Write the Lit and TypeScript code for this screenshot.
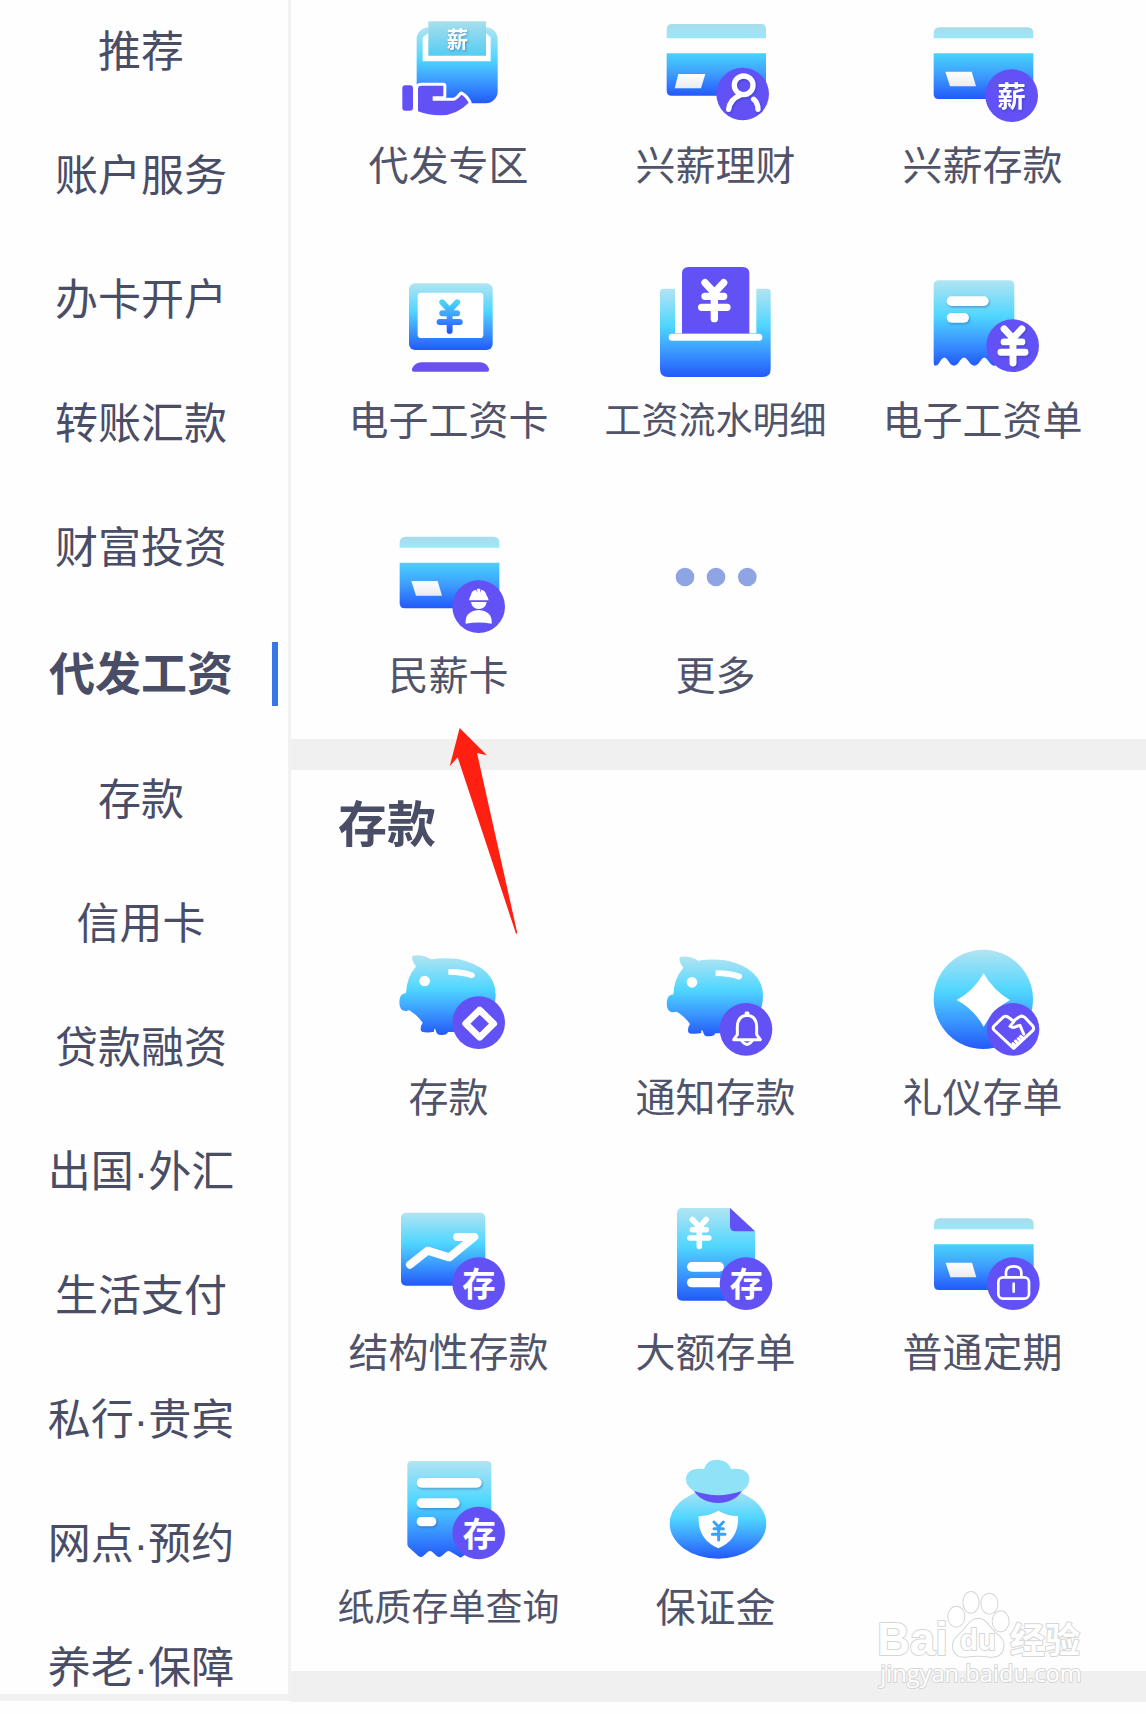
import { LitElement, html, svg, css, nothing, type SVGTemplateResult } from "lit";
import { customElement, property, state } from "lit/decorators.js";
import { classMap } from "lit/directives/class-map.js";

type Art = SVGTemplateResult;

interface Service {
  label: string;
  origin: [number, number];
  art: Art;
  marked?: boolean;
}

/* ---------- shared icon parts ---------- */

const gradients = svg`
  <defs>
    <linearGradient id="full" x1="0" y1="0" x2="0" y2="1">
      <stop offset="0" stop-color="#b2e4f2"/>
      <stop offset=".42" stop-color="#4fd6ff"/>
      <stop offset=".72" stop-color="#3a97ff"/>
      <stop offset="1" stop-color="#2359f8"/>
    </linearGradient>
    <linearGradient id="low" x1="0" y1="0" x2="0" y2="1">
      <stop offset="0" stop-color="#48d3fb"/>
      <stop offset=".5" stop-color="#3d9bfd"/>
      <stop offset="1" stop-color="#2259fb"/>
    </linearGradient>
    <linearGradient id="strip" x1="0" y1="0" x2="0" y2="1">
      <stop offset="0" stop-color="#a9dcea"/>
      <stop offset="1" stop-color="#9ce7fb"/>
    </linearGradient>
    <linearGradient id="tag" x1="0" y1="0" x2="0" y2="1">
      <stop offset="0" stop-color="#a8dfec"/>
      <stop offset="1" stop-color="#55ccf3"/>
    </linearGradient>
    <linearGradient id="chip" x1="0" y1="0" x2="0" y2="1">
      <stop offset="0" stop-color="#ffffff"/>
      <stop offset="1" stop-color="#e9ebf2"/>
    </linearGradient>
  </defs>`;

const badge = (cx: number, cy: number, inner: Art) => svg`
  <circle cx=${cx} cy=${cy} r="79" fill="#6252f6"/>${inner}`;

const card = (x: number, y: number) => svg`
  <g transform="translate(${x} ${y})">
    <path d="M0 33V18Q0 0 18 0H281Q299 0 299 18V33Z" fill="url(#strip)"/>
    <path d="M0 78H299V200Q299 215 284 215H15Q0 215 0 200Z" fill="url(#low)"/>
    <path d="M35 133H114L127 177H49Z" fill="url(#chip)"/>
  </g>`;

const yen = (cx: number, cy: number, scale: number, stroke = "#fff", width = 22) => svg`
  <path transform="translate(${cx} ${cy}) scale(${scale})"
    d="M-28-54L0-24L28-54M-28-13H28M-38 20H38M0-24V54"
    fill="none" stroke=${stroke} stroke-width=${width} stroke-linecap="round" stroke-linejoin="round"/>`;

const glyph = (x: number, y: number, size: number, char: string) => svg`
  <text class="glyph" x=${x} y=${y} font-size=${size} text-anchor="middle" fill="#fff">${char}</text>`;

const bar = (x: number, y: number, w: number, h = 29) => svg`
  <rect x=${x} y=${y} width=${w} height=${h} rx=${h / 2} fill="#fff"/>`;

const pig = (x: number, y: number) => svg`
  <g transform="translate(${x} ${y})">
    <path fill="url(#full)" d="M98 77Q128 72 152 88Q192 82 235 87Q347 112 347 195Q346 260 290 306H204Q202 315 185 315Q170 316 168 304Q167 296 162 297V305Q150 308 134 307Q122 307 122 298Q122 285 128 278Q112 256 94 245Q86 238 80 243Q58 245 58 215Q59 190 78 189Q80 142 108 109Q92 88 98 77Z"/>
    <circle cx="134" cy="153" r="16" fill="#fff"/>
    <path d="M205 117Q250 116 282 129Q290 141 275 145Q246 134 205 134Z" fill="#fff"/>
  </g>`;

/* ---------- icons ---------- */

const payroll = svg`
  <rect x="110" y="82" width="243" height="228" rx="36" fill="url(#full)"/>
  <path d="M128 112L146 98H316L332 112V184H128Z" fill="#fff"/>
  <path d="M145 64H318V167H145Z" fill="url(#tag)"/>
  <g class="lifted">${glyph(232, 140, 64, "薪")}</g>
  <rect x="67" y="256" width="32" height="76" rx="9" fill="#6252f6"/>
  <path d="M124 257H190V289H158V302H222Q232 299 244 284Q256 290 266 308Q230 346 180 346Q145 346 114 334V267Q114 257 124 257Z"
    fill="#6252f6" stroke="#fff" stroke-width="18" stroke-linejoin="round" paint-order="stroke"/>`;

const wealth = svg`
  <path d="M860 115V88Q860 72 876 72H1142Q1158 72 1158 88V115Z" fill="url(#strip)"/>
  <path d="M860 160H1158V272Q1158 287 1143 287H875Q860 287 860 272Z" fill="url(#low)"/>
  <path d="M895 222H976L963 265H884Z" fill="url(#chip)"/>
  ${badge(1088, 282, svg`
    <g class="lifted" fill="none" stroke="#fff" stroke-width="16" stroke-linecap="round">
      <circle cx="1091" cy="256" r="28"/>
      <path d="M1046 328Q1050 298 1080 286M1121 298Q1134 309 1134 328"/>
    </g>`)}`;

const salaryDeposit = svg`
  ${card(461, 82)}
  ${badge(695, 287, svg`<g class="lifted">${glyph(695, 321, 86, "薪")}</g>`)}`;

const salaryCard = svg`
  <rect x="87" y="100" width="251" height="200" rx="18" fill="url(#full)"/>
  <rect x="113" y="128" width="197" height="136" rx="10" fill="#fff"/>
  ${yen(209, 200, 0.8, "url(#low)")}
  <path d="M102 365Q93 365 97 354Q106 338 124 337H300Q318 338 326 354Q330 365 320 365Z" fill="#6a50ee"/>`;

const statement = svg`
  <path fill="url(#full)" d="M840 126Q840 116 850 116H885V250H1129V116H1162Q1172 116 1172 126V357Q1172 381 1148 381H864Q840 381 840 357Z"/>
  <path fill="#6252f6" d="M906 251V71Q906 51 926 51H1088Q1108 51 1108 71V251Z"/>
  ${bar(866, 251, 281, 21)}
  ${yen(1003, 152, 1)}`;

const payslip = svg`
  <path fill="url(#full)" d="M461 107Q461 91 477 91H687Q703 91 703 107V340L640 347Q632 344 625 333Q613 312 601 333Q592 347 583 347Q574 347 565 333Q552 312 539 333Q531 347 522 347Q513 347 505 333Q493 312 481 333Q474 347 466 347Q461 346 461 338Z"/>
  <g class="lifted">${bar(500, 139, 126)}${bar(500, 189, 67)}</g>
  ${badge(698, 287, svg`<g class="lifted">${yen(699, 288, 0.95)}</g>`)}`;

const workerCard = svg`
  ${card(59, 50)}
  ${badge(296, 260, svg`
    <g fill="#fff">
      <path d="M267 241Q269 230 273 225Q274 212 288 209L292 219L291 206H301L300 219L304 209Q318 213 319 225Q324 231 326 241Z"/>
      <path d="M273 246H320Q317 267 296 267Q276 267 273 246Z"/>
      <path d="M257 311Q254 273 296 270Q338 273 335 311Q296 304 257 311Z"/>
    </g>`)}`;

const more = svg`
  <g fill="#8fa5e3"><circle cx="915" cy="171" r="28"/><circle cx="1008" cy="171" r="28"/><circle cx="1102" cy="171" r="28"/></g>`;

const deposit = svg`
  ${pig(0, 0)}
  ${badge(296, 278, svg`<path d="M299 240L341 281L299 322L257 281Z" fill="none" stroke="#fff" stroke-width="20" stroke-linejoin="round"/>`)}`;

const noticeDeposit = svg`
  ${pig(802, 4)}
  ${badge(1098, 298, svg`
    <g fill="none" stroke="#fff" stroke-width="9" stroke-linejoin="round" stroke-linecap="round">
      <path d="M1061 329L1072 314V290Q1073 258 1101 256Q1129 258 1130 290V314L1141 329Z"/>
      <path d="M1086 333Q1101 354 1116 333M1098 249H1104"/>
    </g>`)}`;

const gift = svg`
  <circle cx="370" cy="208" r="149" fill="url(#full)"/>
  <path d="M371 130Q400 182 450 210Q400 238 371 290Q342 238 290 210Q342 182 371 130Z" fill="#fff"/>
  ${badge(459, 298, svg`
    <g fill="none" stroke="#fff" stroke-width="9" stroke-linejoin="round" stroke-linecap="round">
      <path d="M461 355L402 300Q397 294 402 288L430 261Q437 256 444 261L460 273L476 262Q485 255 494 262L519 289Q523 296 518 302Z"/>
      <path d="M462 274L450 289Q460 296 472 288L480 286L491 312M459 341L465 347M467 333L474 341M475 326L483 333M482 319L491 326"/>
    </g>`)}`;

const structured = svg`
  <rect x="63" y="68" width="253" height="219" rx="15" fill="url(#full)"/>
  <path d="M90 224L143 182L208 202L283 141H232" fill="none" stroke="#fff" stroke-width="24" stroke-linecap="round" stroke-linejoin="round"/>
  ${badge(296, 281, glyph(297, 318, 100, "存"))}`;

const largeDeposit = svg`
  <path fill="url(#full)" d="M891 70Q891 54 907 54H1050L1125 124V332H907Q891 332 891 316Z"/>
  <path fill="#6252f6" d="M1050 54L1125 124H1065Q1050 124 1050 109Z"/>
  ${yen(958, 129, 0.75)}
  ${bar(921, 216, 111)}${bar(921, 264, 120, 28)}
  ${badge(1098, 281, glyph(1099, 318, 100, "存"))}`;

const fixedTerm = svg`
  ${card(222, 85)}
  ${badge(460, 281, svg`
    <g fill="none" stroke="#fff" stroke-width="8" stroke-linecap="round">
      <rect x="415" y="262" width="92" height="64" rx="14"/>
      <path d="M438 260V248Q438 229 461 229Q484 229 484 248V260M461 281V305"/>
    </g>`)}`;

const paperDeposit = svg`
  <path fill="url(#full)" d="M232 75Q232 63 244 63H472Q484 63 484 75V290L392 353L363 336Q356 330 349 336L334 349Q328 353 321 349L307 336Q300 330 293 336L279 349Q272 353 265 348L236 322Q232 318 232 312Z"/>
  <g class="lifted">${bar(260, 114, 195)}${bar(260, 175, 129)}${bar(260, 231, 59, 28)}</g>
  ${badge(446, 279, glyph(448, 317, 100, "存"))}`;

const guarantee = svg`
  <ellipse cx="1164" cy="251" rx="145" ry="105" fill="url(#full)"/>
  <path d="M1090 150H1238Q1215 188 1164 189Q1113 188 1090 150Z" fill="#6252f6"/>
  <path d="M1092 153Q1066 138 1068 115Q1072 82 1122 87Q1130 59 1162 59Q1194 60 1203 87Q1254 82 1258 115Q1259 140 1236 153Q1164 178 1092 153Z" fill="#90e2f7"/>
  <path d="M1165 212Q1194 229 1224 228Q1228 298 1165 325Q1102 298 1106 228Q1136 229 1165 212Z" fill="#fff"/>
  ${yen(1166, 273, 0.5, "#36a3f7", 18)}`;

/* ---------- data ---------- */

const CATEGORIES = [
  "推荐", "账户服务", "办卡开户", "转账汇款", "财富投资", "代发工资", "存款",
  "信用卡", "贷款融资", "出国·外汇", "生活支付", "私行·贵宾", "网点·预约", "养老·保障",
];

const PAYROLL: Service[] = [
  { label: "代发专区", origin: [27, 27], art: payroll },
  { label: "兴薪理财", origin: [828, 27], art: wealth },
  { label: "兴薪存款", origin: [429, 27], art: salaryDeposit },
  { label: "电子工资卡", origin: [27, 42], art: salaryCard },
  { label: "工资流水明细", origin: [828, 42], art: statement },
  { label: "电子工资单", origin: [429, 42], art: payslip },
  { label: "民薪卡", origin: [27, -3], art: workerCard, marked: true },
  { label: "更多", origin: [828, -3], art: more },
];

const DEPOSITS: Service[] = [
  { label: "存款", origin: [27, 33], art: deposit },
  { label: "通知存款", origin: [828, 33], art: noticeDeposit },
  { label: "礼仪存单", origin: [189, 33], art: gift },
  { label: "结构性存款", origin: [27, 18], art: structured },
  { label: "大额存单", origin: [828, 18], art: largeDeposit },
  { label: "普通定期", origin: [189, 18], art: fixedTerm },
  { label: "纸质存单查询", origin: [177, 33], art: paperDeposit },
  { label: "保证金", origin: [978, 33], art: guarantee },
];

/* ---------- elements ---------- */

@customElement("service-grid")
class ServiceGrid extends LitElement {
  @property({ attribute: false }) services: Service[] = [];

  static styles = css`
    :host { display: block; }
    .grid {
      display: grid;
      grid-template-columns: repeat(3, minmax(0, 1fr));
      row-gap: 73px;
      padding: 0 30px 38px 24px;
    }
    .service {
      position: relative;
      display: flex;
      flex-direction: column;
      align-items: center;
      gap: 6px;
      margin: 0;
      padding: 0;
      border: 0;
      background: none;
      color: #50536a;
      font: 40px/56px "Noto Sans CJK SC", sans-serif;
      white-space: nowrap;
      cursor: pointer;
    }
    .long { font-size: 37px; }
    .icon { display: block; width: 120px; height: 120px; overflow: visible; }
    .glyph { font-family: "Noto Sans CJK SC", sans-serif; font-weight: 700; }
    .lifted { filter: drop-shadow(3px 4px 3px rgba(20, 40, 120, 0.35)); }
    .pointer {
      position: absolute;
      z-index: 1;
      left: 50%;
      top: 209px;
      width: 68px;
      height: 206px;
      pointer-events: none;
    }
  `;

  render() {
    return html`<div class="grid">
      ${this.services.map((s) => html`
        <button type="button" class=${classMap({ service: true, long: s.label.length > 5 })}>
          <svg class="icon" viewBox="${s.origin[0]} ${s.origin[1]} 360 360" aria-hidden="true">${gradients}${s.art}</svg>
          <span>${s.label}</span>
          ${s.marked ? html`
            <svg class="pointer" viewBox="207 624 204 618" aria-hidden="true">
              <path d="M239 624L321 706L291 699L412 1240L408 1241L233 712L209 739Z" fill="#ff2012"/>
            </svg>` : nothing}
        </button>`)}
    </div>`;
  }
}

@customElement("app-root")
class AppRoot extends LitElement {
  @state() private active = "代发工资";

  static styles = css`
    :host {
      display: block;
      min-height: 100vh;
      background: #fefefe;
      color: #4a4d66;
      font-family: "Noto Sans CJK SC", sans-serif;
    }
    .page {
      display: grid;
      grid-template-columns: 291px minmax(0, 1fr);
      align-items: start;
    }
    .side {
      display: flex;
      flex-direction: column;
      gap: 72px;
      padding: 26px 10px 0 4px;
      border-right: 3px solid #f1f1f1;
      border-bottom: 7px solid #f1f1f1;
    }
    .tab {
      position: relative;
      margin: 0;
      padding: 0;
      border: 0;
      background: none;
      color: inherit;
      font: 43px/52px "Liberation Sans", "Noto Sans CJK SC", sans-serif;
      white-space: nowrap;
      cursor: pointer;
    }
    .active { font-size: 46px; font-weight: 700; line-height: 56px; }
    .active::after {
      content: "";
      position: absolute;
      top: -4px;
      bottom: -4px;
      right: 0;
      width: 6px;
      background: #3b76e8;
    }
    .section { position: relative; border-bottom: 31px solid #f0f0f0; }
    .first { padding-top: 9px; }
    .title {
      margin: 0 0 84px;
      padding: 15px 47px 0;
      font-size: 49px;
      font-weight: 700;
      line-height: 72px;
    }
    .mark {
      position: absolute;
      right: 59px;
      bottom: -24px;
      width: 210px;
      height: 110px;
      pointer-events: none;
    }
    .latin { font-family: "Liberation Sans", sans-serif; font-weight: 700; }
    .han { font-family: "Noto Sans CJK SC", sans-serif; font-weight: 700; }
    .url { font-family: "Open Sans", sans-serif; }
  `;

  render() {
    return html`<div class="page">
      <nav class="side" aria-label="分类">
        ${CATEGORIES.map((c) => html`
          <button type="button" class=${classMap({ tab: true, active: c === this.active })}
            @click=${() => { this.active = c; }}>${c}</button>`)}
      </nav>
      <main>
        <section class="section first" aria-label="代发工资">
          <service-grid .services=${PAYROLL}></service-grid>
        </section>
        <section class="section">
          <h2 class="title">存款</h2>
          <service-grid .services=${DEPOSITS}></service-grid>
          <svg class="mark" viewBox="96 75 630 330" aria-hidden="true">
            <g fill="#fff" stroke="#d6d6d6" stroke-width="6" stroke-linejoin="round" paint-order="stroke">
              <text class="latin" x="97" y="286" font-size="136">Bai</text>
              <ellipse cx="334" cy="170" rx="24" ry="30"/>
              <ellipse cx="378" cy="127" rx="23" ry="31"/>
              <ellipse cx="433" cy="131" rx="24" ry="30"/>
              <ellipse cx="467" cy="184" rx="24" ry="30"/>
              <path d="M399 176Q418 176 434 200Q446 216 464 230Q480 246 474 268Q466 292 436 290Q399 284 362 290Q332 292 325 268Q320 244 338 228Q354 214 366 198Q382 176 399 176Z"/>
              <text class="latin" x="345" y="270" font-size="88">du</text>
              <text class="han" x="495" y="278" font-size="105">经验</text>
              <text class="url" x="106" y="366" font-size="71">jingyan.baidu.com</text>
            </g>
          </svg>
        </section>
      </main>
    </div>`;
  }
}
